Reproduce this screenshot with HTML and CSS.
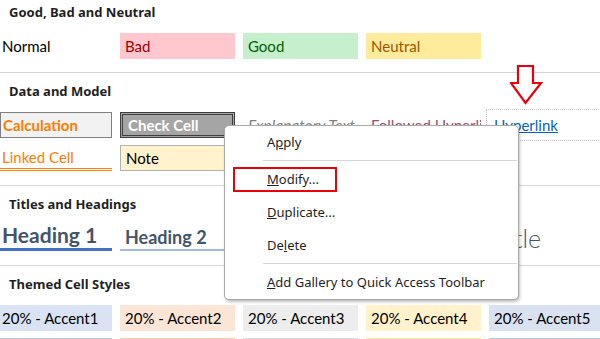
FILE: index.html
```html
<!DOCTYPE html>
<html lang="en">
<head>
    <meta charset="UTF-8">
    <meta name="viewport" content="width=device-width, initial-scale=1.0">
    <title>Cell Styles</title>
    <link rel="stylesheet" href="styles.css">
</head>
<body>
    <div class="gallery">
        <section class="group first">
            <div class="group-title">Good, Bad and Neutral</div>
            <div class="cells">
                <div class="cell normal">Normal</div>
                <div class="cell bad">Bad</div>
                <div class="cell good">Good</div>
                <div class="cell neutral">Neutral</div>
            </div>
        </section>

        <section class="group">
            <div class="group-title">Data and Model</div>
            <div class="cells">
                <div class="cell calculation">Calculation</div>
                <div class="cell check">Check Cell</div>
                <div class="cell explanatory">Explanatory Text</div>
                <div class="cell followed">Followed Hyperlink</div>
                <div class="cell hyperlink"><span>Hyperlink</span></div>
                <div class="cell linked">Linked Cell</div>
                <div class="cell note">Note</div>
                <div class="cell output">Output</div>
                <div class="cell warning">Warning Text</div>
                <div class="cell"></div>
            </div>
        </section>

        <section class="group">
            <div class="group-title">Titles and Headings</div>
            <div class="cells">
                <div class="cell heading1">Heading 1</div>
                <div class="cell heading2">Heading 2</div>
                <div class="cell heading3">Heading 3</div>
                <div class="cell heading4">Heading 4</div>
                <div class="cell title">Title</div>
            </div>
        </section>

        <section class="group">
            <div class="group-title">Themed Cell Styles</div>
            <div class="cells">
                <div class="cell accent1">20% - Accent1</div>
                <div class="cell accent2">20% - Accent2</div>
                <div class="cell accent3">20% - Accent3</div>
                <div class="cell accent4">20% - Accent4</div>
                <div class="cell accent5">20% - Accent5</div>
                <div class="cell accent1-40">40% - Accent1</div>
                <div class="cell accent2-40">40% - Accent2</div>
                <div class="cell accent3-40">40% - Accent3</div>
                <div class="cell accent4-40">40% - Accent4</div>
                <div class="cell accent5-40">40% - Accent5</div>
            </div>
        </section>

        <!-- red arrow pointing at the Hyperlink style -->
        <svg class="arrow" width="34" height="42" viewBox="0 0 34 42">
            <path d="M8 2 H23 V19 H31 L15.5 39 L1 19 H8 Z" fill="#fff" stroke="#e8000b" stroke-width="2.2" stroke-linejoin="miter"/>
        </svg>

        <div class="menu">
            <div class="menu-item">A<u>p</u>ply</div>
            <div class="menu-sep"></div>
            <div class="menu-item marked"><u>M</u>odify...<span class="mark"></span></div>
            <div class="menu-item"><u>D</u>uplicate...</div>
            <div class="menu-item">De<u>l</u>ete</div>
            <div class="menu-sep"></div>
            <div class="menu-item"><u>A</u>dd Gallery to Quick Access Toolbar</div>
        </div>
    </div>
</body>
</html>
```

FILE: styles.css
```css
body {
    margin: 0;
    background-color: #ffffff;
    font-family: 'Lato', 'Open Sans', sans-serif;
    overflow: hidden;
}

.gallery {
    position: relative;
    width: 600px;
    height: 339px;
    overflow: hidden;
}

.group {
    border-top: 1px solid #d5d5d5;
    padding-bottom: 14px;
}

.group.first {
    border-top: none;
    padding-bottom: 13px;
}

.group-title {
    padding: 9px 0 12px 9px;
    line-height: 18px;
    font-family: 'Noto Sans', sans-serif;
    font-size: 13px;
    font-weight: bold;
    color: #1f1f1f;
}

.first .group-title {
    padding-top: 3px;
}

.cells {
    display: grid;
    grid-template-columns: 112px 115px 115px 115px 115px;
    grid-auto-rows: 26px;
    column-gap: 8px;
    row-gap: 7px;
}

.cell {
    box-sizing: border-box;
    display: flex;
    align-items: center;
    padding-left: 5px;
    font-size: 15px;
    color: #000;
    white-space: nowrap;
    overflow: hidden;
}

.cells .cell:nth-child(5n+1) {
    padding-left: 2px;
}

.bad {
    background-color: #ffc7ce;
    color: #9c0006;
}

.good {
    background-color: #c6efce;
    color: #006100;
}

.neutral {
    background-color: #ffeb9c;
    color: #9c5700;
}

.calculation {
    background-color: #f2f2f2;
    border: 1px solid #7f7f7f;
    color: #fa7d00;
    font-weight: bold;
}

.check {
    background-color: #a5a5a5;
    border: 3px double #3f3f3f;
    color: #ffffff;
    font-weight: bold;
}

.explanatory {
    color: #7f7f7f;
    font-style: italic;
    font-size: 15.5px;
}

.followed {
    color: #954f72;
    text-decoration: underline;
}

.hyperlink {
    color: #0563c1;
    outline: 1px dotted #c4c4c4;
    outline-offset: 2px;
}

.hyperlink span {
    text-decoration: underline;
}

.linked {
    color: #fa7d00;
    border-bottom: 3px double #ff8001;
}

.note {
    background-color: #fff2cc;
    border: 1px solid #b2b2b2;
}

.heading1,
.heading2,
.heading3,
.heading4 {
    font-weight: bold;
    color: #44546a;
    align-items: flex-end;
    overflow: visible;
}

.heading1 {
    font-size: 21px;
    border-bottom: 3px solid #4472c4;
    line-height: 24px;
    padding-bottom: 1px;
}

.heading2 {
    font-size: 18px;
    border-bottom: 2px solid #a2b8e1;
    line-height: 22px;
    padding-bottom: 1px;
}

.title {
    font-size: 25px;
    font-weight: 300;
    color: #44546a;
    align-items: flex-end;
    line-height: 26px;
    overflow: visible;
}

.accent1 { background-color: #dae3f3; }
.accent2 { background-color: #fbe5d6; }
.accent3 { background-color: #ededed; }
.accent4 { background-color: #fff2cc; }
.accent5 { background-color: #dae1f0; }
.accent1-40 { background-color: #b4c7e7; }
.accent2-40 { background-color: #f8cbad; }
.accent3-40 { background-color: #dbdbdb; }
.accent4-40 { background-color: #ffe699; }
.accent5-40 { background-color: #b4c6e7; }

.arrow {
    position: absolute;
    left: 510px;
    top: 64px;
}

.menu {
    position: absolute;
    left: 224px;
    top: 125px;
    width: 295px;
    box-sizing: border-box;
    background-color: #ffffff;
    border: 1px solid #a9a9a9;
    border-radius: 5px;
    box-shadow: 1px 2px 3px rgba(0, 0, 0, 0.25);
    font-family: 'Noto Sans', sans-serif;
    font-size: 13px;
    color: #1e1e1e;
}

.menu-item {
    position: relative;
    height: 33px;
    line-height: 33px;
    padding-left: 42px;
}

.menu-sep {
    height: 1px;
    margin: 1px 1px 2px 38px;
    background-color: #d5d5d5;
}

.mark {
    position: absolute;
    left: 8px;
    top: 4px;
    width: 104px;
    height: 25px;
    box-sizing: border-box;
    border: 2px solid #e8000b;
}
```
